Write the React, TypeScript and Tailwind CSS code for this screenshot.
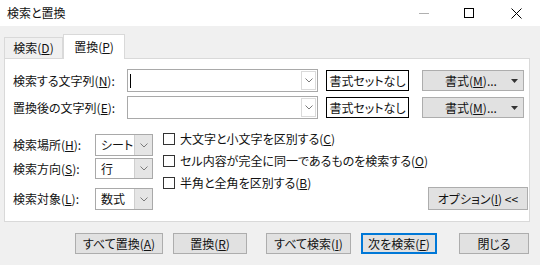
import { ReactNode } from "react";

const Chevron = () => (
  <svg width="8" height="5" viewBox="0 0 8 5" fill="none">
    <polyline points="0.5,0.5 4,4 7.5,0.5" stroke="#7a7a7a" strokeWidth="1" />
  </svg>
);

const Combo = ({ children }: { children?: ReactNode }) => (
  <div className="w-[191px] h-[23px] shrink-0 border border-[#a9a9a9] bg-white flex items-center">
    <div className="flex-1 flex items-center pl-[2px]">{children}</div>
    <div className="w-[15px] h-[19px] mr-[1px] border border-[#dadada] flex items-center justify-center">
      <Chevron />
    </div>
  </div>
);

const Select = ({ value, h }: { value: string; h: string }) => (
  <div className={`w-[58px] ${h} shrink-0 border border-[#a9a9a9] bg-white flex items-center`}>
    <span className="flex-1 pl-[5px] whitespace-nowrap">{value}</span>
    <div className="w-[18px] h-full border-l border-[#cfcfcf] bg-[#e5e5e5] flex items-center justify-center">
      <Chevron />
    </div>
  </div>
);

const Check = ({ children }: { children: ReactNode }) => (
  <div className="h-[22px] flex items-center whitespace-nowrap">
    <div className="w-[12px] h-[12px] shrink-0 border border-[#333333] bg-white" />
    <span className="ml-[5px]">{children}</span>
  </div>
);

const Btn = ({ w, children, def }: { w: string; children: ReactNode; def?: boolean }) => (
  <div
    className={
      def
        ? `${w} h-[21px] border-2 border-[#0078d7] bg-[#e1e1e1] flex items-center justify-center whitespace-nowrap`
        : `${w} h-[21px] border border-[#adadad] bg-[#e1e1e1] flex items-center justify-center whitespace-nowrap`
    }
  >
    {children}
  </div>
);

const FormatButtons = () => (
  <>
    <div className="ml-[8px] w-[83px] h-[21px] shrink-0 border border-black bg-white flex items-center justify-center whitespace-nowrap">
      書式セットなし
    </div>
    <div className="ml-[13px] w-[102px] h-[21px] shrink-0 border border-[#adadad] bg-[#e1e1e1] flex items-center">
      <span className="flex-1 text-center pl-[8px] whitespace-nowrap">
        書式(<u>M</u>)...
      </span>
      <svg width="7" height="4" viewBox="0 0 7 4" className="mr-[5px]">
        <polygon points="0,0 7,0 3.5,4" fill="#333" />
      </svg>
    </div>
  </>
);

export default function App() {
  return (
    <div className="w-[540px] h-[265px] overflow-hidden bg-[#f0f0f0] text-[12px] leading-[16px] text-[#111] font-['Noto_Sans_CJK_JP','Noto_Sans',sans-serif] [font-feature-settings:'palt']">
      {/* title bar */}
      <div className="h-[26px] bg-white flex items-center pl-[7px]">
        <span>検索と置換</span>
        <div className="ml-auto flex items-center h-full">
          <div className="w-[10px] h-px bg-[#b0b0b0] mr-[35px]" />
          <div className="w-[10px] h-[10px] border border-black mr-[37px]" />
          <svg width="11" height="11" viewBox="0 0 11 11" className="mr-[18px]">
            <path d="M0.5 0.5 L10.5 10.5 M10.5 0.5 L0.5 10.5" stroke="black" strokeWidth="1" />
          </svg>
        </div>
      </div>

      {/* tabs */}
      <div className="h-[32px] flex items-end pl-[4px]">
        <div className="w-[59px] h-[21px] border border-b-0 border-[#d9d9d9] flex items-center justify-center">
          <span>
            検索(<u>D</u>)
          </span>
        </div>
        <div className="w-[62px] h-[25px] -mb-px bg-white border border-b-0 border-[#d9d9d9] flex items-center justify-center relative z-10">
          <span>
            置換(<u>P</u>)
          </span>
        </div>
      </div>

      {/* panel */}
      <div className="ml-[4px] w-[526px] h-[164px] bg-white border border-[#d9d9d9] pt-[10px] pl-[8px]">
        <div className="h-[23px] flex items-center">
          <span className="w-[114px] shrink-0 whitespace-nowrap">
            検索する文字列(<u>N</u>):
          </span>
          <Combo>
            <div className="w-px h-[14px] bg-black" />
          </Combo>
          <FormatButtons />
        </div>
        <div className="mt-[4px] h-[23px] flex items-center">
          <span className="w-[114px] shrink-0 whitespace-nowrap">
            置換後の文字列(<u>E</u>):
          </span>
          <Combo />
          <FormatButtons />
        </div>

        {/* options */}
        <div className="mt-[9px] h-[82px] flex">
          <div className="flex flex-col shrink-0">
            <div className="mt-[6px] flex items-center">
              <span className="w-[82px] whitespace-nowrap">
                検索場所(<u>H</u>):
              </span>
              <Select value="シート" h="h-[22px]" />
            </div>
            <div className="mt-[2px] flex items-center">
              <span className="w-[82px] whitespace-nowrap">
                検索方向(<u>S</u>):
              </span>
              <Select value="行" h="h-[21px]" />
            </div>
            <div className="mt-[9px] flex items-center">
              <span className="w-[82px] whitespace-nowrap">
                検索対象(<u>L</u>):
              </span>
              <Select value="数式" h="h-[22px]" />
            </div>
          </div>
          <div className="ml-[10px] flex flex-col shrink-0">
            <Check>
              大文字と小文字を区別する(<u>C</u>)
            </Check>
            <Check>
              セル内容が完全に同一であるものを検索する(<u>O</u>)
            </Check>
            <Check>
              半角と全角を区別する(<u>B</u>)
            </Check>
          </div>
          <div className="ml-auto mr-[5px] self-end w-[100px] h-[23px] shrink-0 border border-[#adadad] bg-[#e1e1e1] flex items-center justify-center whitespace-nowrap">
            オプション(<u>I</u>)&nbsp;&lt;&lt;
          </div>
        </div>
      </div>

      {/* bottom buttons */}
      <div className="mt-[11px] flex items-center pl-[75px]">
        <Btn w="w-[88px]">
          すべて置換(<u>A</u>)
        </Btn>
        <div className="ml-[10px]">
          <Btn w="w-[74px]">
            置換(<u>R</u>)
          </Btn>
        </div>
        <div className="ml-[19px]">
          <Btn w="w-[85px]">
            すべて検索(<u>I</u>)
          </Btn>
        </div>
        <div className="ml-[10px]">
          <Btn w="w-[76px]" def>
            次を検索(<u>F</u>)
          </Btn>
        </div>
        <div className="ml-[22px]">
          <Btn w="w-[70px]">閉じる</Btn>
        </div>
      </div>
    </div>
  );
}
